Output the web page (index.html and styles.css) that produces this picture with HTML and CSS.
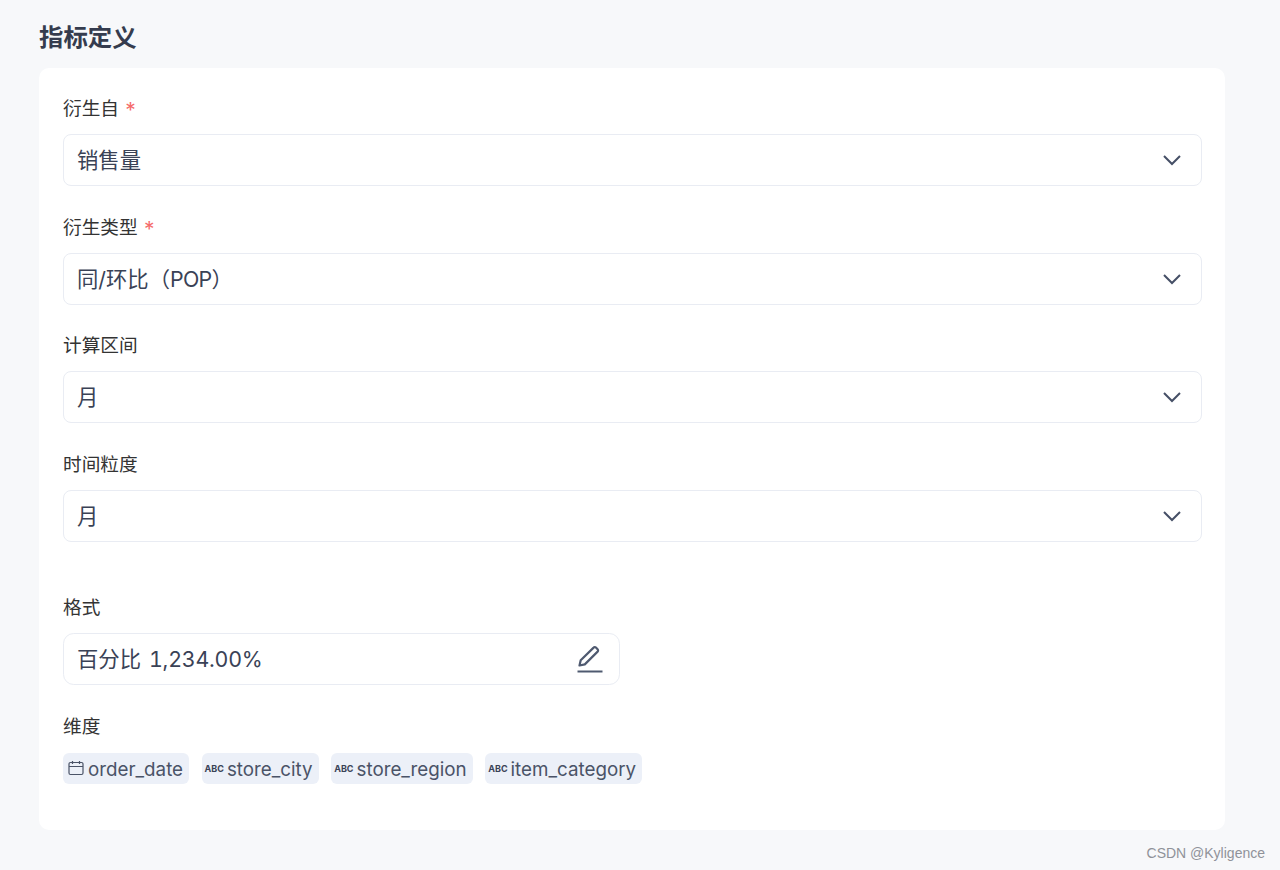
FILE: index.html
```html
<!DOCTYPE html>
<html lang="zh-CN">
<head>
  <meta charset="UTF-8" />
  <title>指标定义</title>
  <link rel="stylesheet" href="styles.css">
</head>
<body>
  <h2 class="title">指标定义</h2>
  <div class="card">
    <div class="field">
      <label class="label">衍生自 <span class="req">*</span></label>
      <div class="select">
        <span class="value">销售量</span>
        <svg class="chevron" viewBox="0 0 20 12"><path d="M2 2l8 8 8-8" /></svg>
      </div>
    </div>
    <div class="field">
      <label class="label">衍生类型 <span class="req">*</span></label>
      <div class="select">
        <span class="value">同/环比（<span class="latin">POP</span>）</span>
        <svg class="chevron" viewBox="0 0 20 12"><path d="M2 2l8 8 8-8" /></svg>
      </div>
    </div>
    <div class="field">
      <label class="label">计算区间</label>
      <div class="select">
        <span class="value">月</span>
        <svg class="chevron" viewBox="0 0 20 12"><path d="M2 2l8 8 8-8" /></svg>
      </div>
    </div>
    <div class="field field-last">
      <label class="label">时间粒度</label>
      <div class="select">
        <span class="value">月</span>
        <svg class="chevron" viewBox="0 0 20 12"><path d="M2 2l8 8 8-8" /></svg>
      </div>
    </div>
    <div class="field">
      <label class="label">格式</label>
      <div class="select select-format">
        <span class="value">百分比 <span class="num">1,234.00%</span></span>
        <svg class="pencil" viewBox="0 0 28 28">
          <path class="pencil-body" d="M3.5 20.5l1.2-5.2L17.6 2.6a1.6 1.6 0 0 1 2.3 0l1.7 1.7a1.6 1.6 0 0 1 0 2.3L8.8 19.4z" />
          <path class="pencil-line" d="M1.5 26.5h25" />
        </svg>
      </div>
    </div>
    <div class="dims">
      <label class="label">维度</label>
      <div class="tags">
        <span class="tag">
          <svg class="cal" viewBox="0 0 16 16">
            <rect x="1" y="2.5" width="14" height="12" rx="1.5" />
            <path d="M1 6.5h14M4.5 1v3M11.5 1v3" />
          </svg>
          <span class="tag-text">order_date</span>
        </span>
        <span class="tag"><span class="abc">ABC</span><span class="tag-text">store_city</span></span>
        <span class="tag"><span class="abc">ABC</span><span class="tag-text">store_region</span></span>
        <span class="tag"><span class="abc">ABC</span><span class="tag-text">item_category</span></span>
      </div>
    </div>
  </div>
  <div class="mark">CSDN @Kyligence</div>
</body>
</html>
```

FILE: styles.css
```css
html, body {
  height: 100%;
}

body {
  margin: 0;
  padding: 0 55px 0 39px;
  box-sizing: border-box;
  height: 870px;
  overflow: hidden;
  position: relative;
  background: #f7f8fa;
  font-family: Inter, "Noto Sans CJK SC", sans-serif;
  color: #2c3345;
}

.title {
  margin: 0;
  height: 68px;
  padding-top: 19px;
  box-sizing: border-box;
  font-size: 24.4px;
  line-height: 36px;
  font-weight: 700;
  color: #353c4e;
}

.card {
  background: #fff;
  border-radius: 10px;
  height: 762px;
  box-sizing: border-box;
  padding: 24px;
}

.field {
  margin-bottom: 24.67px;
}

.field-last {
  margin-bottom: 49px;
}

.label {
  display: block;
  height: 30px;
  line-height: 33px;
  margin-bottom: 12px;
  font-size: 18.67px;
  color: #333;
}

.req {
  color: #f56c6c;
  font-size: 21px;
  line-height: 0;
  margin-left: 1px;
  vertical-align: -3px;
}

.select {
  display: flex;
  align-items: center;
  justify-content: space-between;
  height: 52px;
  box-sizing: border-box;
  padding: 0 19px 0 13px;
  border: 1px solid #e9ecf3;
  border-radius: 8px;
  background: #fff;
  font-size: 21.33px;
  color: #3a4256;
  width: 1139px;
}

.value {
  margin-bottom: 3px;
}

.latin {
  letter-spacing: -0.7px;
}

.num {
  margin-left: 2px;
  font-variant-numeric: tabular-nums;
  letter-spacing: -0.2px;
}

.select-format {
  width: 557px;
  border-radius: 10.67px;
  padding-right: 15px;
}

.chevron {
  width: 20px;
  height: 12px;
  fill: none;
  stroke: #454f66;
  stroke-width: 2;
}

.pencil {
  width: 28px;
  height: 28px;
  fill: none;
  stroke: #4f5a70;
}

.pencil-body {
  stroke-width: 2.2;
  stroke-linejoin: round;
}

.pencil-line {
  stroke-width: 2;
}

.dims .label {
  margin-bottom: 13px;
}

.tags {
  display: flex;
  gap: 12.5px;
}

.tag {
  display: flex;
  align-items: center;
  height: 31px;
  padding: 0 6px 0 3px;
  border-radius: 6px;
  background: #ecf0f8;
  font-size: 18.8px;
  color: #4a5367;
}

.tag-text {
  margin-top: 2px;
}

.abc {
  font-size: 9px;
  font-weight: 700;
  margin: 1px 3px 0 0;
  color: #3a4256;
}

.cal {
  width: 16px;
  height: 16px;
  margin: 0 4px 0 2px;
  fill: none;
  stroke: #4a5367;
  stroke-width: 1.2;
}

.mark {
  position: absolute;
  right: 15px;
  top: 843px;
  font-family: "Liberation Sans", sans-serif;
  font-size: 14px;
  line-height: 20px;
  color: #8f9299;
}
```
